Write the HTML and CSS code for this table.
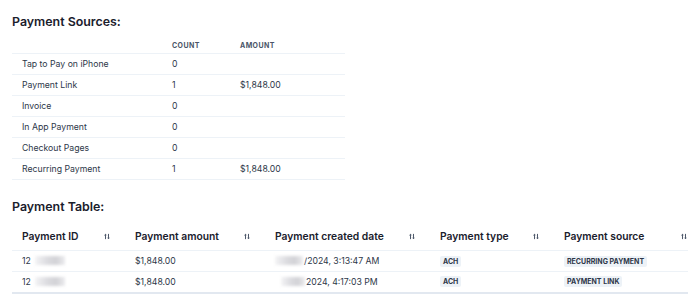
FILE: index.html
```html
<!DOCTYPE html>
<html lang="en">
<head>
    <meta charset="UTF-8">
    <title>Payments</title>
    <link rel="stylesheet" href="styles.css">
</head>
<body>
    <h2 class="sectionTitle">Payment Sources:</h2>
    <table class="sources">
        <thead>
            <tr><th></th><th>Count</th><th>Amount</th></tr>
        </thead>
        <tbody>
            <tr><td>Tap to Pay on iPhone</td><td>0</td><td></td></tr>
            <tr><td>Payment Link</td><td>1</td><td>$1,848.00</td></tr>
            <tr><td>Invoice</td><td>0</td><td></td></tr>
            <tr><td>In App Payment</td><td>0</td><td></td></tr>
            <tr><td>Checkout Pages</td><td>0</td><td></td></tr>
            <tr><td>Recurring Payment</td><td>1</td><td>$1,848.00</td></tr>
        </tbody>
    </table>

    <h2 class="sectionTitle second">Payment Table:</h2>
    <table class="payments">
        <thead>
            <tr>
                <th class="colId"><div class="headCell">Payment ID <svg class="sortIcon" viewBox="0 0 8 8"><path d="M2 7.5V1M0.6 2.4L2 1 3.4 2.4M6 0.5V7M4.6 5.6L6 7 7.4 5.6"/></svg></div></th>
                <th class="colAmount"><div class="headCell">Payment amount <svg class="sortIcon" viewBox="0 0 8 8"><path d="M2 7.5V1M0.6 2.4L2 1 3.4 2.4M6 0.5V7M4.6 5.6L6 7 7.4 5.6"/></svg></div></th>
                <th class="colDate"><div class="headCell">Payment created date <svg class="sortIcon" viewBox="0 0 8 8"><path d="M2 7.5V1M0.6 2.4L2 1 3.4 2.4M6 0.5V7M4.6 5.6L6 7 7.4 5.6"/></svg></div></th>
                <th class="colType"><div class="headCell">Payment type <svg class="sortIcon" viewBox="0 0 8 8"><path d="M2 7.5V1M0.6 2.4L2 1 3.4 2.4M6 0.5V7M4.6 5.6L6 7 7.4 5.6"/></svg></div></th>
                <th class="colSource"><div class="headCell">Payment source <svg class="sortIcon" viewBox="0 0 8 8"><path d="M2 7.5V1M0.6 2.4L2 1 3.4 2.4M6 0.5V7M4.6 5.6L6 7 7.4 5.6"/></svg></div></th>
            </tr>
        </thead>
        <tbody>
            <tr>
                <td>12<span class="masked idMask"></span></td>
                <td>$1,848.00</td>
                <td><span class="masked dateMask"></span>/2024, 3:13:47 AM</td>
                <td><span class="badge">ACH</span></td>
                <td><span class="badge">Recurring Payment</span></td>
            </tr>
            <tr>
                <td>12<span class="masked idMask"></span></td>
                <td>$1,848.00</td>
                <td><span class="masked dateMask short"></span>2024, 4:17:03 PM</td>
                <td><span class="badge">ACH</span></td>
                <td><span class="badge">Payment Link</span></td>
            </tr>
        </tbody>
    </table>
</body>
</html>
```

FILE: styles.css
```css
body {
    margin: 0;
    padding: 12px 0 0 12px;
    font-family: Inter, "Liberation Sans", sans-serif;
    color: #2d3748;
    background: #ffffff;
    overflow: hidden;
}
.sectionTitle {
    margin: 0;
    font-size: 12.4px;
    font-weight: 600;
    line-height: 20px;
    color: #1a202c;
}
.second {
    margin-top: 17px;
}
table {
    border-collapse: collapse;
}
th, td {
    box-sizing: border-box;
}
.sources {
    width: 333px;
    margin-top: 6px;
    font-size: 8.7px;
}
.sources th {
    text-align: left;
    font-size: 7px;
    font-weight: 700;
    letter-spacing: 0.06em;
    text-transform: uppercase;
    color: #4a5568;
    padding: 0 10px;
    height: 15px;
    border-bottom: 1px solid #edf2f7;
}
.sources th:first-child {
    width: 150px;
}
.sources th:nth-child(2) {
    width: 68px;
}
.sources td {
    padding: 0 10px;
    height: 21px;
    border-bottom: 1px solid #edf2f7;
}
.payments {
    margin-top: 6px;
    width: 690px;
    table-layout: fixed;
    font-size: 8.7px;
}
.colId { width: 113px; }
.colAmount { width: 140px; }
.colDate { width: 165px; }
.colType { width: 124px; }
.colSource { width: 148px; }
.payments th {
    text-align: left;
    font-size: 10.3px;
    font-weight: 600;
    color: #1a202c;
    height: 28px;
    padding: 0 10px;
    border-bottom: 1px solid #edf2f7;
}
.headCell {
    display: flex;
    align-items: center;
    justify-content: space-between;
    padding-right: 5px;
}
.sortIcon {
    width: 6px;
    height: 7px;
    fill: none;
    stroke: #4a5568;
    stroke-width: 1.3;
}
.payments td {
    padding: 0 10px;
    height: 21px;
    border-bottom: 1px solid #edf2f7;
    white-space: nowrap;
}
.payments tbody tr:last-child td {
    border-bottom: 2px solid #e2e8f0;
}
.masked {
    display: inline-block;
    height: 9px;
    vertical-align: -1px;
    background: linear-gradient(90deg, #f4f4f6, #dcdce0 40%, #d2d2d6 70%, #ececee);
    filter: blur(1.5px);
}
.idMask {
    width: 30px;
    margin-left: 4px;
}
.dateMask {
    width: 28px;
    margin-right: 1px;
}
.dateMask.short {
    width: 24px;
    margin-left: 6px;
}
.badge {
    display: inline-block;
    padding: 1px 3px;
    font-size: 7px;
    font-weight: 700;
    text-transform: uppercase;
    color: #2d3748;
    background: #edf2f7;
    border-radius: 2px;
}
```
